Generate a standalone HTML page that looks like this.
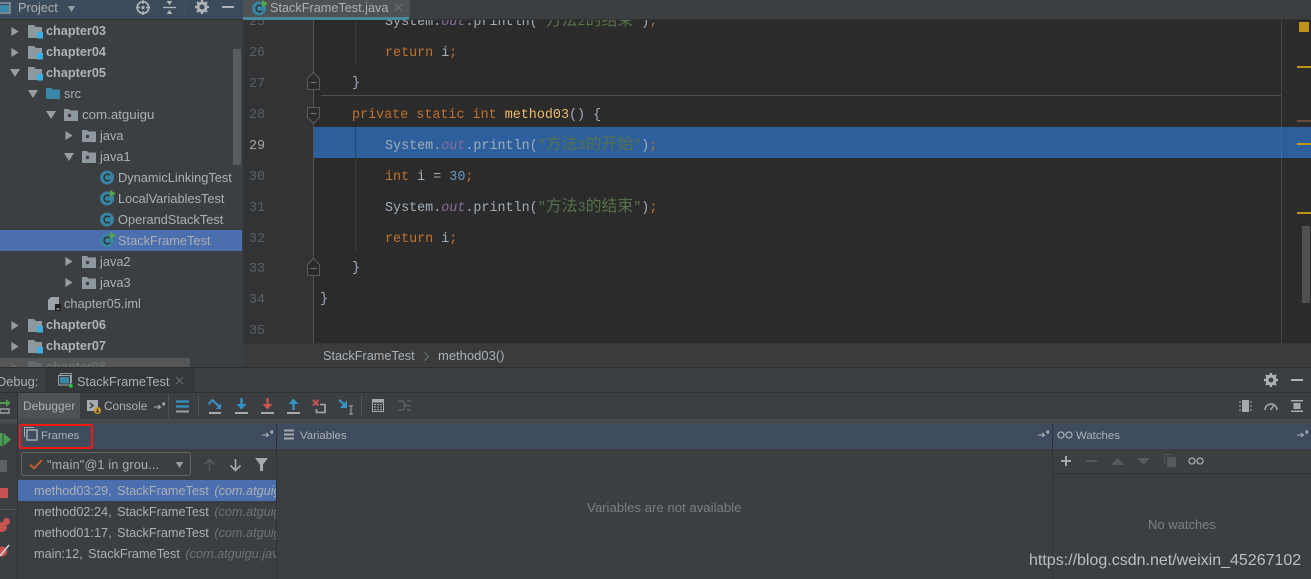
<!DOCTYPE html>
<html><head><meta charset="utf-8">
<style>
html,body{margin:0;padding:0;background:#3c3f41;width:1311px;height:579px;overflow:hidden}
body{position:relative;font-family:"Liberation Sans","Noto Sans CJK SC",sans-serif;font-size:12.8px;color:#adb0b2}
.a{position:absolute}
.t{position:absolute;white-space:nowrap;line-height:16px}
.b{font-weight:bold;color:#b0b3b5;font-size:12.7px}
.c{position:absolute;white-space:nowrap;font-family:"Liberation Mono","Noto Sans CJK SC",monospace;font-size:13.4px;line-height:18px;color:#a0adba}
.n{position:absolute;left:249px;width:16px;text-align:left;font-family:"Liberation Mono",monospace;font-size:13.4px;line-height:18px;color:#5c5f62}
.k{color:#c0722f}.s{color:#56724a}.f{color:#8a6b9c;font-style:italic}.m{color:#f0ba66}.d{color:#6897bb}
.s b{font-weight:normal;font-size:15.9px;line-height:0;font-family:"Noto Sans CJK SC",sans-serif}
svg{position:absolute;overflow:visible}
i.g{font-style:italic;color:#6f7376}
.w{word-spacing:2px;font-size:12.7px}
</style></head><body>
<svg width="0" height="0" style="position:absolute">
<defs>
<symbol id="mod" viewBox="0 0 16 16"><path d="M0 1h6l2 2h6v11H0z" fill="#8e999f"/><rect x="9" y="8" width="6" height="6.500" fill="#3caee0"/></symbol>
<symbol id="pkg" viewBox="0 0 14 12"><path d="M0 0h5l1.500 1.500H14V12H0z" fill="#8e999f"/><circle cx="5.500" cy="6.500" r="1.700" fill="#3c3f41"/></symbol>
<symbol id="cls" viewBox="0 0 16 16"><circle cx="7" cy="8.500" r="7" fill="#38839f"/><path d="M9.800 6.300A3.300 3.300 0 1 0 9.800 10.700" fill="none" stroke="#2b2b2b" stroke-width="1.300"/></symbol>
<symbol id="clr" viewBox="0 0 16 16"><circle cx="7" cy="8.500" r="7" fill="#38839f"/><path d="M9.800 6.300A3.300 3.300 0 1 0 9.800 10.700" fill="none" stroke="#2b2b2b" stroke-width="1.300"/><path d="M10 0l6 3.500-6 3.500z" fill="#57a644"/></symbol>
<symbol id="pin" viewBox="0 0 12 9"><path d="M0 5h6M4 3l2.500 2L4 7" fill="none" stroke="#b0b3b5" stroke-width="1"/><rect x="8.500" y="0.500" width="2.500" height="3" fill="#b0b3b5"/></symbol>
<symbol id="r" viewBox="0 0 8 10"><path d="M0 0l8 5-8 5z" fill="#9a9da0"/></symbol>
<symbol id="dn" viewBox="0 0 10 8"><path d="M0 0h10L5 8z" fill="#9a9da0"/></symbol>
</defs>
</svg>

<!-- editor -->
<div class="a" style="left:243px;top:20px;width:1068px;height:323px;background:#2b2b2b"></div>
<div class="a" style="left:243px;top:20px;width:70px;height:323px;background:#313335"></div>
<div class="a" style="left:313px;top:20px;width:1px;height:323px;background:#555"></div>
<div class="a" style="left:1281px;top:20px;width:1px;height:323px;background:#484848"></div>
<div class="a" style="left:321px;top:95px;width:960px;height:1px;background:#505050"></div>
<div class="a" style="left:314px;top:127px;width:997px;height:31px;background:#2d5f9c"></div>
<div class="a" style="left:1281px;top:127px;width:1px;height:31px;background:#3d6a9f"></div>
<div class="a" style="left:355px;top:20px;width:1px;height:45px;background:#3b3b3b"></div>
<div class="a" style="left:355px;top:127px;width:1px;height:124px;background:#3b3b3b"></div>
<div class="a" style="left:355px;top:127px;width:1px;height:31px;background:#23466f"></div>

<div class="n" style="top:14px">25</div>
<div class="n" style="top:45px">26</div>
<div class="n" style="top:76px">27</div>
<div class="n" style="top:107px">28</div>
<div class="n" style="top:138px;color:#a4a3a3">29</div>
<div class="n" style="top:169px">30</div>
<div class="n" style="top:200px">31</div>
<div class="n" style="top:231px">32</div>
<div class="n" style="top:261px">33</div>
<div class="n" style="top:292px">34</div>
<div class="n" style="top:323px">35</div>

<div class="c" style="left:385px;top:14px">System.<span class="f">out</span>.println(<span class="s">"<b>方法</b>2<b>的结束</b>"</span>)<span class="k">;</span></div>
<div class="c" style="left:385px;top:45px"><span class="k">return</span> i<span class="k">;</span></div>
<div class="c" style="left:352px;top:75px">}</div>
<div class="c" style="left:352px;top:107px"><span class="k">private static int</span> <span class="m">method03</span>() {</div>
<div class="c" style="left:385px;top:138px">System.<span class="f">out</span>.println(<span class="s">"<b>方法</b>3<b>的开始</b>"</span>)<span class="k">;</span></div>
<div class="c" style="left:385px;top:169px"><span class="k">int</span> i = <span class="d">30</span><span class="k">;</span></div>
<div class="c" style="left:385px;top:200px">System.<span class="f">out</span>.println(<span class="s">"<b>方法</b>3<b>的结束</b>"</span>)<span class="k">;</span></div>
<div class="c" style="left:385px;top:231px"><span class="k">return</span> i<span class="k">;</span></div>
<div class="c" style="left:352px;top:260px">}</div>
<div class="c" style="left:320px;top:291px">}</div>

<svg style="left:307px;top:72px" width="13" height="18"><path d="M0.500 17.500V6.500L6.500 0.500l6 6v11z" fill="#2b2b2b" stroke="#5a5d5f"/><path d="M3.500 10.500h6" stroke="#777"/></svg>
<svg style="left:307px;top:107px" width="13" height="17"><path d="M0.500 0.500h12v10l-6 6-6-6z" fill="#2b2b2b" stroke="#5a5d5f"/><path d="M3.500 6.500h6" stroke="#777"/></svg>
<svg style="left:307px;top:258px" width="13" height="18"><path d="M0.500 17.500V6.500L6.500 0.500l6 6v11z" fill="#2b2b2b" stroke="#5a5d5f"/><path d="M3.500 10.500h6" stroke="#777"/></svg>

<!-- markers -->
<div class="a" style="left:1299px;top:22px;width:10px;height:10px;background:#bd9417"></div>
<div class="a" style="left:1297px;top:66px;width:14px;height:2px;background:#bd9417"></div>
<div class="a" style="left:1297px;top:120px;width:14px;height:2px;background:#6a4b3c"></div>
<div class="a" style="left:1297px;top:143px;width:14px;height:2px;background:#bd9417"></div>
<div class="a" style="left:1297px;top:212px;width:14px;height:2px;background:#bd9417"></div>
<div class="a" style="left:1302px;top:226px;width:8px;height:77px;background:#4f4f4f"></div>

<!-- top bar -->
<div class="a" style="left:0;top:0;width:243px;height:19px;background:#3c4b5c"></div>
<div class="a" style="left:243px;top:0;width:1068px;height:19px;background:#3c3f41"></div>
<div class="a" style="left:0;top:19px;width:1311px;height:1px;background:#323232"></div>
<svg style="left:0;top:2px" width="13" height="12"><rect x="-3" y="1" width="13" height="10" fill="none" stroke="#9aa7b0" stroke-width="1.300"/><rect x="-2" y="3" width="11" height="7" fill="#3a87a8"/></svg>
<div class="t" style="left:18px;top:0">Project</div>
<svg style="left:67px;top:6px" width="9" height="6"><use href="#dn" width="9" height="6"/></svg>
<svg style="left:136px;top:0" width="15" height="15" viewBox="0 0 15 15"><circle cx="7" cy="7.500" r="5.800" fill="none" stroke="#b0b3b5" stroke-width="1.700"/><circle cx="7" cy="7.500" r="1.600" fill="#b0b3b5"/><path d="M7 0v4M7 11v4M0 7.500h4M10 7.500h4" stroke="#b0b3b5" stroke-width="1.400"/></svg>
<svg style="left:163px;top:1px" width="13" height="13" viewBox="0 0 13 13"><path d="M0 6.500h13" stroke="#b0b3b5" stroke-width="1.300"/><path d="M3.500 0h6L6.500 4zM3.500 13h6L6.500 9z" fill="#b0b3b5"/></svg>
<div class="a" style="left:185px;top:1px;width:1px;height:16px;background:#4a5560"></div>
<svg style="left:195px;top:0" width="14" height="14" viewBox="0 0 14 14"><circle cx="7" cy="7" r="4" fill="none" stroke="#b0b3b5" stroke-width="3"/><path d="M7 0v3M7 11v3M0 7h3M11 7h3M2 2l2 2M10 10l2 2M2 12l2-2M10 4l2-2" stroke="#b0b3b5" stroke-width="2.200"/></svg>
<div class="a" style="left:222px;top:6px;width:12px;height:2px;background:#b0b3b5"></div>

<!-- tab -->
<div class="a" style="left:243px;top:0;width:167px;height:17px;background:#4e5254"></div>
<div class="a" style="left:243px;top:17px;width:166px;height:3px;background:#4a8a9a"></div>
<svg style="left:252px;top:0" width="16" height="16"><use href="#clr" width="16" height="16"/></svg>
<div class="t" style="left:270px;top:0;color:#adb0b2;font-size:12.7px">StackFrameTest.java</div>
<svg style="left:394px;top:3px" width="9" height="9"><path d="M1 1l7 7M8 1L1 8" stroke="#6e7173" stroke-width="1"/></svg>

<!-- project tree -->
<div class="a" style="left:0;top:230px;width:242px;height:21px;background:#4b6eaf"></div>
<div class="a" style="left:233px;top:49px;width:8px;height:116px;background:#5a5d5f"></div>

<svg style="left:11px;top:27px" width="8" height="9"><use href="#r" width="8" height="9"/></svg>
<svg style="left:28px;top:24px" width="16" height="16"><use href="#mod" width="16" height="16"/></svg>
<div class="t b" style="left:46px;top:23px">chapter03</div>
<svg style="left:11px;top:48px" width="8" height="9"><use href="#r" width="8" height="9"/></svg>
<svg style="left:28px;top:45px" width="16" height="16"><use href="#mod" width="16" height="16"/></svg>
<div class="t b" style="left:46px;top:44px">chapter04</div>
<svg style="left:10px;top:69px" width="10" height="8"><use href="#dn" width="10" height="8"/></svg>
<svg style="left:28px;top:66px" width="16" height="16"><use href="#mod" width="16" height="16"/></svg>
<div class="t b" style="left:46px;top:65px">chapter05</div>
<svg style="left:28px;top:90px" width="10" height="8"><use href="#dn" width="10" height="8"/></svg>
<svg style="left:46px;top:88px" width="14" height="11"><path d="M0 0h5l1.500 1.500H14V11H0z" fill="#3a87a8"/></svg>
<div class="t" style="left:64px;top:86px">src</div>
<svg style="left:46px;top:111px" width="10" height="8"><use href="#dn" width="10" height="8"/></svg>
<svg style="left:64px;top:109px" width="14" height="12"><use href="#pkg" width="14" height="12"/></svg>
<div class="t" style="left:82px;top:107px;font-size:13.3px">com.atguigu</div>
<svg style="left:65px;top:131px" width="8" height="9"><use href="#r" width="8" height="9"/></svg>
<svg style="left:82px;top:130px" width="14" height="12"><use href="#pkg" width="14" height="12"/></svg>
<div class="t" style="left:100px;top:128px">java</div>
<svg style="left:64px;top:153px" width="10" height="8"><use href="#dn" width="10" height="8"/></svg>
<svg style="left:82px;top:151px" width="14" height="12"><use href="#pkg" width="14" height="12"/></svg>
<div class="t" style="left:100px;top:149px">java1</div>
<svg style="left:100px;top:169px" width="16" height="16"><use href="#cls" width="16" height="16"/></svg>
<div class="t" style="left:118px;top:170px">DynamicLinkingTest</div>
<svg style="left:100px;top:190px" width="16" height="16"><use href="#clr" width="16" height="16"/></svg>
<div class="t" style="left:118px;top:191px">LocalVariablesTest</div>
<svg style="left:100px;top:211px" width="16" height="16"><use href="#cls" width="16" height="16"/></svg>
<div class="t" style="left:118px;top:212px">OperandStackTest</div>
<svg style="left:100px;top:232px" width="16" height="16"><use href="#clr" width="16" height="16"/></svg>
<div class="t" style="left:118px;top:233px">StackFrameTest</div>
<svg style="left:65px;top:257px" width="8" height="9"><use href="#r" width="8" height="9"/></svg>
<svg style="left:82px;top:256px" width="14" height="12"><use href="#pkg" width="14" height="12"/></svg>
<div class="t" style="left:100px;top:254px">java2</div>
<svg style="left:65px;top:278px" width="8" height="9"><use href="#r" width="8" height="9"/></svg>
<svg style="left:82px;top:277px" width="14" height="12"><use href="#pkg" width="14" height="12"/></svg>
<div class="t" style="left:100px;top:275px">java3</div>
<svg style="left:48px;top:297px" width="14" height="14"><path d="M0 3l3-3h8v13H0z" fill="#9aa4aa"/><rect x="7" y="7" width="6" height="7" fill="#1e1e1e"/><rect x="8.500" y="11.500" width="3" height="1" fill="#ddd"/></svg>
<div class="t" style="left:64px;top:296px">chapter05.iml</div>
<svg style="left:11px;top:321px" width="8" height="9"><use href="#r" width="8" height="9"/></svg>
<svg style="left:28px;top:318px" width="16" height="16"><use href="#mod" width="16" height="16"/></svg>
<div class="t b" style="left:46px;top:317px">chapter06</div>
<svg style="left:11px;top:342px" width="8" height="9"><use href="#r" width="8" height="9"/></svg>
<svg style="left:28px;top:339px" width="16" height="16"><use href="#mod" width="16" height="16"/></svg>
<div class="t b" style="left:46px;top:338px">chapter07</div>
<svg style="left:11px;top:363px" width="8" height="9"><use href="#r" width="8" height="9"/></svg>
<svg style="left:28px;top:360px" width="16" height="16"><use href="#mod" width="16" height="16"/></svg>
<div class="t b" style="left:46px;top:359px">chapter08</div>
<div class="a" style="left:0;top:358px;width:190px;height:9px;background:#5a5c5e;opacity:.8"></div>

<!-- breadcrumb -->
<div class="a" style="left:243px;top:343px;width:1068px;height:24px;background:#393b3d;border-top:1px solid #353739;box-sizing:border-box"></div>
<div class="t" style="left:323px;top:348px;font-size:12.7px">StackFrameTest</div>
<svg style="left:424px;top:352px" width="5" height="9"><path d="M0.500 0.500l4 4-4 4" fill="none" stroke="#75787a"/></svg>
<div class="t" style="left:438px;top:348px;font-size:13px">method03()</div>

<!-- debug header -->
<div class="a" style="left:0;top:367px;width:1311px;height:1px;background:#2b2d2f"></div>
<div class="a" style="left:0;top:368px;width:1311px;height:25px;background:#3c3f41"></div>
<div class="a" style="left:0;top:392px;width:1311px;height:1px;background:#2f3133"></div>
<div class="t" style="left:-3px;top:374px">Debug:</div>
<div class="a" style="left:45px;top:368px;width:149px;height:24px;background:#35383a"></div>
<svg style="left:58px;top:373px" width="15" height="15"><rect x="2.500" y="0.500" width="11" height="9" fill="none" stroke="#8f9aa0"/><rect x="0.500" y="2.500" width="12" height="9.500" fill="#3c3f41" stroke="#9aa7b0"/><rect x="2" y="4" width="9" height="6.500" fill="#3a87a8"/><circle cx="13" cy="13" r="1.800" fill="#29d63a"/></svg>
<div class="t" style="left:77px;top:374px">StackFrameTest</div>
<svg style="left:175px;top:376px" width="9" height="9"><path d="M1 1l7 7M8 1L1 8" stroke="#6e7173" stroke-width="1"/></svg>
<svg style="left:1264px;top:373px" width="14" height="14" viewBox="0 0 14 14"><circle cx="7" cy="7" r="4" fill="none" stroke="#b0b3b5" stroke-width="3"/><path d="M7 0v3M7 11v3M0 7h3M11 7h3M2 2l2 2M10 10l2 2M2 12l2-2M10 4l2-2" stroke="#b0b3b5" stroke-width="2.200"/></svg>
<div class="a" style="left:1291px;top:379px;width:12px;height:2px;background:#b0b3b5"></div>

<!-- debug toolbar -->
<div class="a" style="left:0;top:393px;width:1311px;height:27px;background:#3c3f41"></div>
<div class="a" style="left:18px;top:393px;width:62px;height:27px;background:#4e5254"></div>
<div class="t" style="left:23px;top:398px;font-size:11.9px">Debugger</div>
<svg style="left:87px;top:400px" width="15" height="15"><path d="M0 0h11v11H0z" fill="#a7acaf"/><path d="M3 3l3 2.500L3 8" fill="none" stroke="#333" stroke-width="1.300"/><circle cx="10.500" cy="10.500" r="3.500" fill="#d49a2e"/><path d="M10.500 8.500v4M9 11l1.500 1.500L12 11" fill="none" stroke="#3c3f41"/></svg>
<div class="t" style="left:104px;top:398px;font-size:11.8px">Console</div>
<svg style="left:154px;top:402px" width="12" height="9"><use href="#pin" width="12" height="9"/></svg>
<div class="a" style="left:168px;top:394px;width:1px;height:24px;background:#4e5254"></div>
<svg style="left:176px;top:400px" width="13" height="13"><path d="M0 1.500h13M0 6.500h13" stroke="#3592c4" stroke-width="2.200"/><path d="M0 11.500h13" stroke="#9aa0a3" stroke-width="2"/></svg>
<div class="a" style="left:198px;top:396px;width:1px;height:20px;background:#55585a"></div>
<svg style="left:208px;top:398px" width="14" height="16"><path d="M0.500 6L4.500 2 9 6.500 12 9.500" fill="none" stroke="#3592c4" stroke-width="2"/><path d="M13 5v6H8z" fill="#3592c4"/><rect x="1" y="14" width="12" height="2" fill="#a7aaac"/></svg>
<svg style="left:235px;top:398px" width="13" height="16"><path d="M6.500 0v7" stroke="#3592c4" stroke-width="2.400"/><path d="M1.500 6h10l-5 5.500z" fill="#3592c4"/><rect x="0" y="14" width="13" height="2" fill="#a7aaac"/></svg>
<svg style="left:261px;top:398px" width="13" height="16"><path d="M6.500 0v7" stroke="#c75450" stroke-width="2.400"/><path d="M1.500 6h10l-5 5.500z" fill="#c75450"/><rect x="0" y="14" width="13" height="2" fill="#a7aaac"/></svg>
<svg style="left:287px;top:398px" width="13" height="16"><path d="M6.500 12V5" stroke="#3592c4" stroke-width="2.400"/><path d="M1.500 6h10l-5-5.500z" fill="#3592c4"/><rect x="0" y="14" width="13" height="2" fill="#a7aaac"/></svg>
<svg style="left:312px;top:399px" width="14" height="15"><path d="M1 1l5.500 5.500M6.500 1L1 6.500" stroke="#c75450" stroke-width="2"/><path d="M8 5.500h5v8H4.500V10" fill="none" stroke="#a7aaac" stroke-width="1.600"/></svg>
<svg style="left:339px;top:399px" width="15" height="16"><path d="M0 1l6 5" stroke="#3592c4" stroke-width="2.200"/><path d="M8 1v8H1z" fill="#3592c4"/><path d="M10 7h4M12 7v8M10 15h4" fill="none" stroke="#a7aaac"/></svg>
<div class="a" style="left:361px;top:396px;width:1px;height:20px;background:#55585a"></div>
<svg style="left:372px;top:399px" width="12" height="13"><rect x="0.500" y="0.500" width="11" height="12" fill="none" stroke="#a7aaac"/><rect x="0" y="0" width="12" height="3.500" fill="#a7aaac"/><path d="M2 5.500h8M2 8h8M2 10.500h8" stroke="#a7aaac" stroke-dasharray="2 1"/></svg>
<svg style="left:398px;top:400px" width="13" height="11"><path d="M0 1h5l3 4.500L5 10H0M13 1H9M13 5.500H5M13 10H9" fill="none" stroke="#5c5f61" stroke-width="1.400"/></svg>
<svg style="left:1239px;top:400px" width="13" height="12"><rect x="3" y="0" width="7" height="12" fill="#a7aaac"/><path d="M0 2h2M0 6h2M0 10h2M11 2h2M11 6h2M11 10h2" stroke="#a7aaac"/></svg>
<svg style="left:1264px;top:400px" width="14" height="11"><path d="M1 10A6 6 0 1 1 13 10" fill="none" stroke="#a7aaac" stroke-width="1.500"/><path d="M6.500 10L10 5" stroke="#a7aaac" stroke-width="1.500"/></svg>
<svg style="left:1291px;top:400px" width="12" height="12"><path d="M0 0h12v1.500H0zM0 10.500h12V12H0z" fill="#a7aaac"/><path d="M2.500 3h7v6h-7z" fill="#a7aaac"/></svg>

<div class="a" style="left:0;top:419px;width:1311px;height:5px;background:#45494a"></div>

<!-- left rail -->
<div class="a" style="left:17px;top:393px;width:1px;height:186px;background:#323232"></div>
<svg style="left:0;top:398px" width="11" height="16"><path d="M0 5h7" stroke="#4f9c4a" stroke-width="2"/><path d="M6 1l4.500 4L6 9z" fill="#4f9c4a"/><path d="M0 11h9v4H0z" fill="none" stroke="#9aa0a3" stroke-width="1.400"/></svg>
<div class="a" style="left:0;top:420px;width:17px;height:1px;background:#505355"></div>
<svg style="left:0;top:433px" width="11" height="13"><rect x="0" y="0" width="2.500" height="13" fill="#499c54"/><path d="M3.500 0L11 6.500 3.500 13z" fill="#499c54"/></svg>
<div class="a" style="left:0;top:460px;width:7px;height:12px;background:#5e6163"></div>
<div class="a" style="left:0;top:488px;width:8px;height:10px;background:#c75450"></div>
<div class="a" style="left:0;top:509px;width:17px;height:1px;background:#505355"></div>
<svg style="left:0;top:518px" width="11" height="15"><circle cx="2" cy="9" r="5" fill="#c75450"/><circle cx="6.500" cy="3.500" r="3.500" fill="#c75450"/></svg>
<svg style="left:0;top:544px" width="11" height="13"><circle cx="2" cy="7.500" r="5" fill="#c75450"/><path d="M0 12L9 1" stroke="#d3d3d3" stroke-width="1.600"/></svg>

<!-- panels headers -->
<div class="a" style="left:18px;top:424px;width:1293px;height:25px;background:#3f4b5f"></div>
<div class="a" style="left:276px;top:424px;width:1px;height:155px;background:#323232"></div>
<div class="a" style="left:1052px;top:424px;width:1px;height:155px;background:#323232"></div>
<svg style="left:24px;top:427px" width="14" height="14"><path d="M0.500 10V0.500H10" fill="none" stroke="#a7aaac"/><rect x="3" y="3" width="10" height="10" fill="none" stroke="#a7aaac" stroke-width="1.500"/></svg>
<div class="t" style="left:41px;top:428px;font-size:11.3px">Frames</div>
<div class="a" style="left:19px;top:424px;width:74px;height:25px;border:2px solid #f01a10;border-radius:2px;box-sizing:border-box"></div>
<svg style="left:262px;top:430px" width="12" height="9"><use href="#pin" width="12" height="9"/></svg>
<svg style="left:284px;top:429px" width="10" height="11"><path d="M0 1.500h10M0 5.500h10M0 9.500h10" stroke="#a7aaac" stroke-width="2"/></svg>
<div class="t" style="left:300px;top:428px;font-size:11.4px">Variables</div>
<svg style="left:1038px;top:430px" width="12" height="9"><use href="#pin" width="12" height="9"/></svg>
<svg style="left:1057px;top:431px" width="16" height="8"><circle cx="4" cy="4" r="3" fill="none" stroke="#a7aaac" stroke-width="1.300"/><circle cx="12" cy="4" r="3" fill="none" stroke="#a7aaac" stroke-width="1.300"/></svg>
<div class="t" style="left:1076px;top:428px;font-size:11.4px">Watches</div>
<svg style="left:1297px;top:430px" width="12" height="9"><use href="#pin" width="12" height="9"/></svg>

<!-- frames -->
<div class="a" style="left:21px;top:452px;width:170px;height:24px;border:1px solid #646464;border-radius:3px;box-sizing:border-box"></div>
<svg style="left:29px;top:459px" width="14" height="11"><path d="M1 5.500l4 4L13 1" fill="none" stroke="#c75c2e" stroke-width="2"/></svg>
<div class="t" style="left:47px;top:457px;font-size:12.6px;letter-spacing:.2px">"main"@1 in grou...</div>
<svg style="left:175px;top:462px" width="9" height="6"><use href="#dn" width="9" height="6"/></svg>
<svg style="left:203px;top:458px" width="13" height="14"><path d="M6.500 13V2M1.500 6.500L6.500 1.500l5 5" fill="none" stroke="#585b5d" stroke-width="1.600"/></svg>
<svg style="left:229px;top:458px" width="13" height="14"><path d="M6.500 1v11M1.500 7.500l5 5 5-5" fill="none" stroke="#a7aaac" stroke-width="1.600"/></svg>
<svg style="left:255px;top:458px" width="13" height="13"><path d="M0 0h13L8 6.500V13H5V6.500z" fill="#a7aaac"/></svg>

<div class="a" style="left:18px;top:480px;width:258px;height:21px;background:#4b6eaf"></div>
<div class="a" style="left:18px;top:480px;width:258px;height:99px;overflow:hidden">
<div class="t w" style="left:16px;top:3px">method03:29, StackFrameTest <i class="g" style="color:#adb0b2">(com.atguigu.java1)</i></div>
<div class="t w" style="left:16px;top:24px">method02:24, StackFrameTest <i class="g">(com.atguigu.java1)</i></div>
<div class="t w" style="left:16px;top:45px">method01:17, StackFrameTest <i class="g">(com.atguigu.java1)</i></div>
<div class="t w" style="left:16px;top:66px">main:12, StackFrameTest <i class="g">(com.atguigu.java1)</i></div>
</div>
<div class="t" style="left:587px;top:500px;font-size:13.2px;color:#7c7f81">Variables are not available</div>

<!-- watches -->
<svg style="left:1060px;top:455px" width="12" height="12"><path d="M6 1v10M1 6h10" stroke="#b0b3b5" stroke-width="1.800"/></svg>
<div class="a" style="left:1086px;top:460px;width:11px;height:2px;background:#585b5d"></div>
<svg style="left:1111px;top:458px" width="13" height="7"><path d="M0 7L6.500 0 13 7z" fill="#585b5d"/></svg>
<svg style="left:1137px;top:458px" width="13" height="7"><path d="M0 0L6.500 7 13 0z" fill="#585b5d"/></svg>
<svg style="left:1164px;top:454px" width="13" height="13"><path d="M0.500 10V0.500H8" fill="none" stroke="#585b5d"/><rect x="3" y="3" width="9" height="10" fill="#585b5d"/></svg>
<svg style="left:1188px;top:457px" width="16" height="8"><circle cx="4" cy="4" r="3" fill="none" stroke="#a7aaac" stroke-width="1.300"/><circle cx="12" cy="4" r="3" fill="none" stroke="#a7aaac" stroke-width="1.300"/></svg>
<div class="a" style="left:1053px;top:473px;width:258px;height:1px;background:#323232"></div>
<div class="t" style="left:1148px;top:517px;font-size:13px;color:#7c7f81">No watches</div>

<div class="t" style="left:1029px;top:552px;font-size:16px;line-height:18px;color:#bcbec0">https://blog.csdn.net/weixin_45267102</div>
</body></html>
